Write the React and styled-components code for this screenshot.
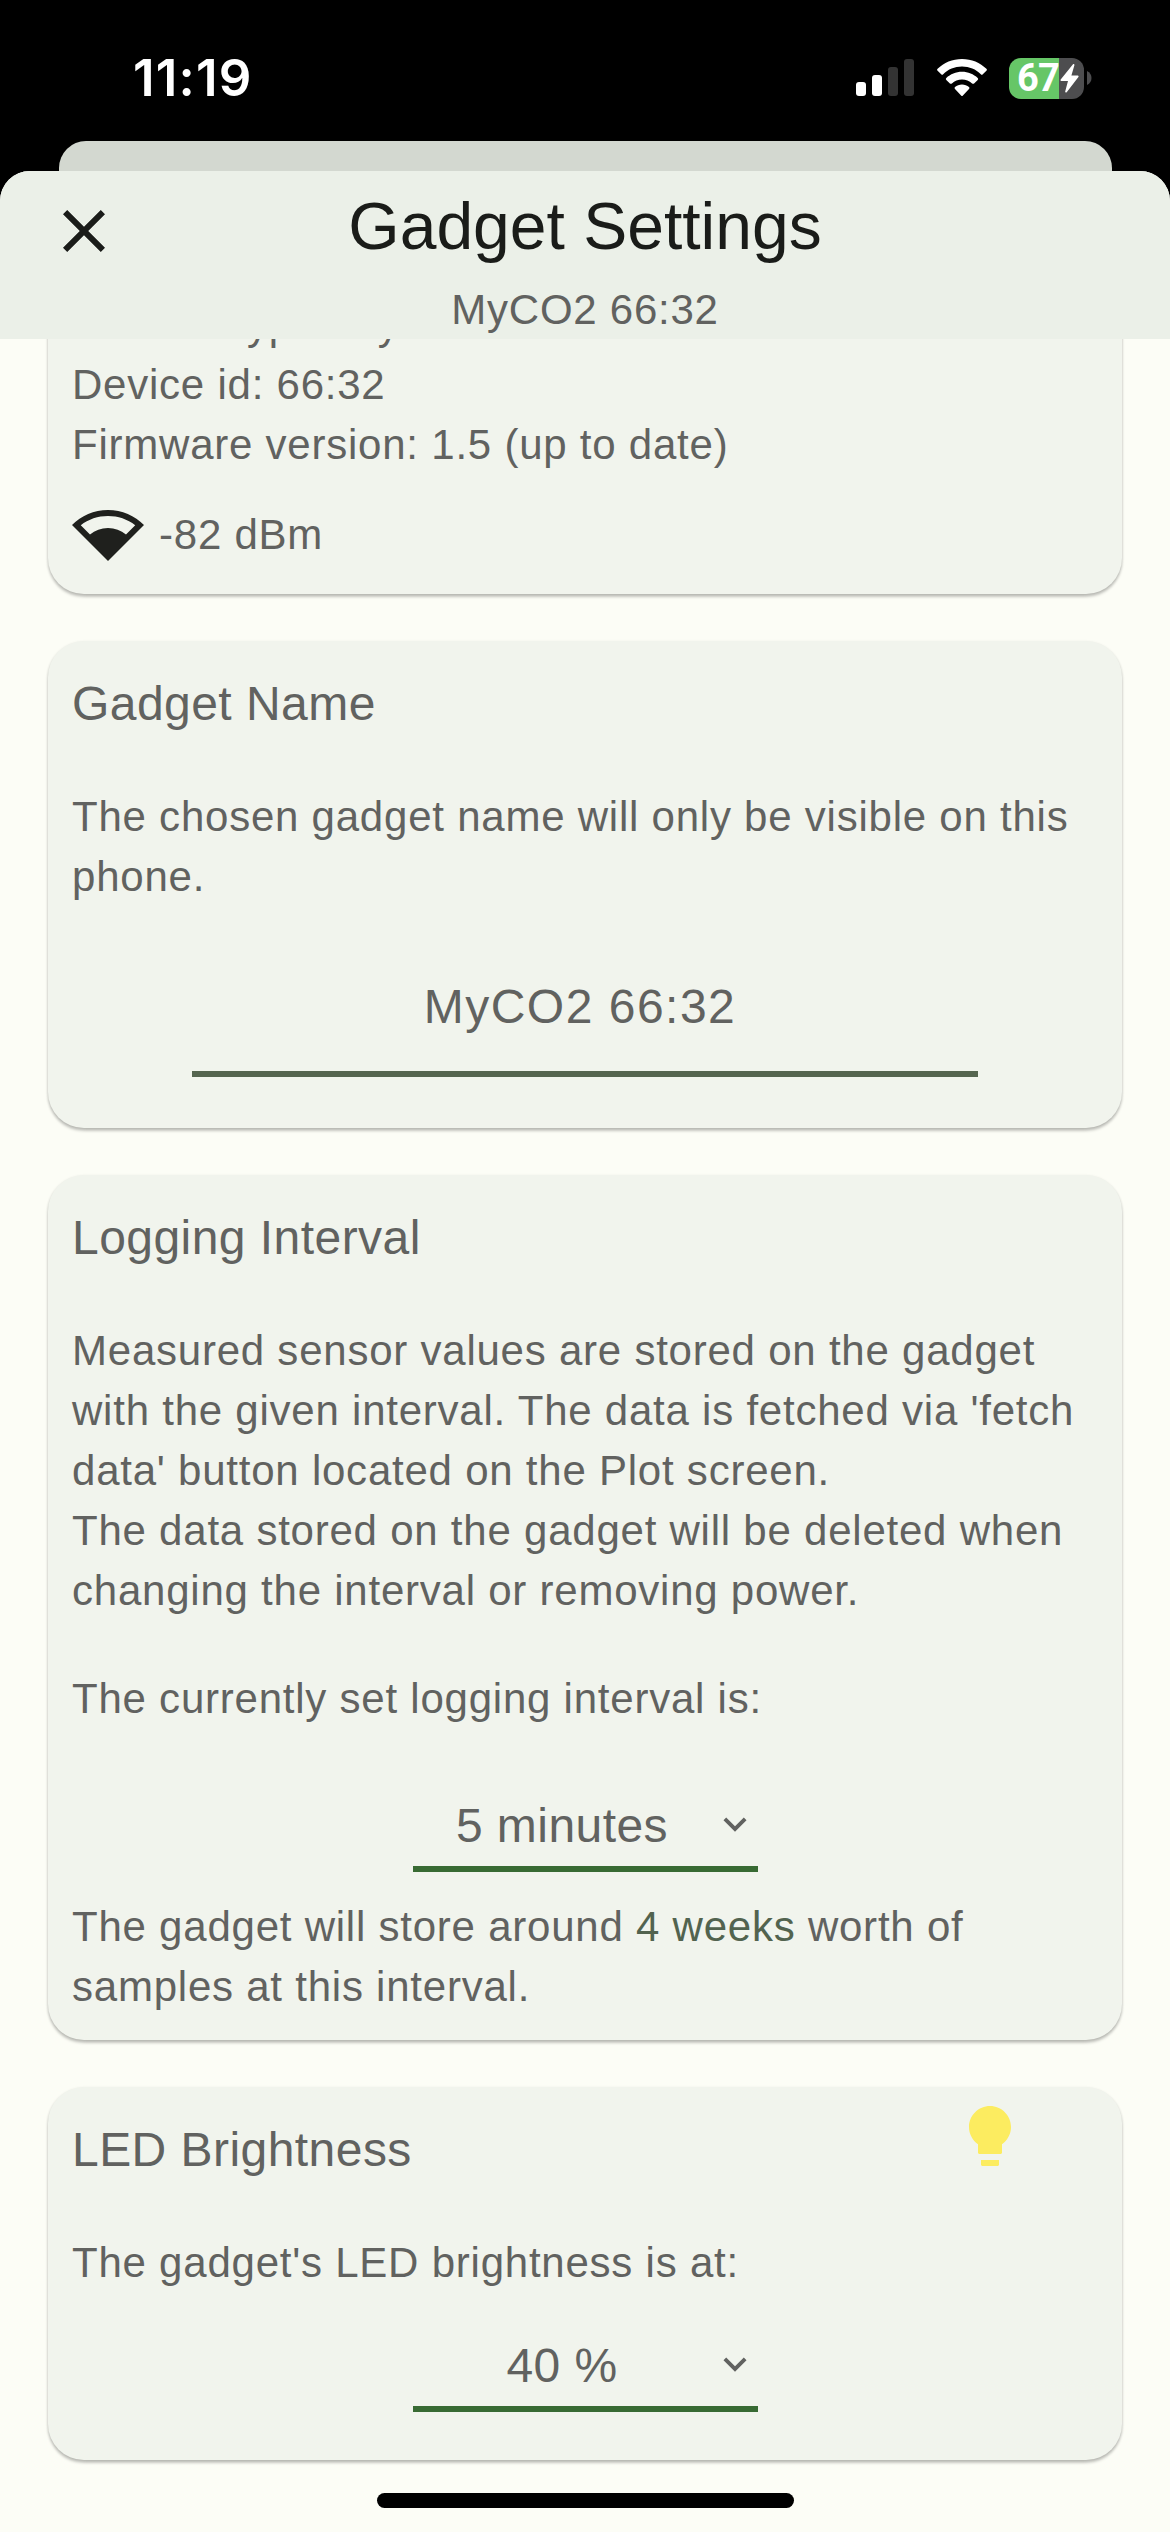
import React from 'react';
import styled, { createGlobalStyle } from 'styled-components';

const sans = '"Liberation Sans", Arial, sans-serif';

const GlobalStyle = createGlobalStyle`
  * { box-sizing: border-box; }
  body { margin: 0; background: #000; }
`;

const Screen = styled.div`
  position: relative;
  display: flex;
  flex-direction: column;
  width: 1170px;
  height: 2532px;
  overflow: hidden;
  background: #000;
  color: #616260;
  font-family: ${sans};
`;

const StatusBar = styled.header`
  display: flex;
  justify-content: space-between;
  height: 141px;
  padding: 48px 78px 0 133px;
`;

const Clock = styled.time`
  color: #fff;
  font: 600 51px/60px Inter, sans-serif;
  letter-spacing: 1.2px;
`;

const StatusIcons = styled.div`
  display: flex;
  align-items: center;
  height: 60px;
  gap: 22px;
`;

const Battery = styled.div`
  display: flex;
  align-items: center;
  gap: 3px;
`;

const BatteryBody = styled.div`
  display: flex;
  align-items: center;
  justify-content: space-between;
  width: 75px;
  height: 41px;
  padding: 0 5px 0 8px;
  border-radius: 12px;
  background: linear-gradient(to right, #66c667 50px, #4d4d4f 50px);
  color: #fff;
  font: 700 38px/41px Roboto, sans-serif;
  letter-spacing: -0.8px;
`;

const PreviousSheet = styled.div`
  height: 30px;
  margin: 0 58px 0 59px;
  border-radius: 27px 27px 0 0;
  background: #d3d8d0;
`;

const Sheet = styled.main`
  display: flex;
  flex-direction: column;
  flex: 1;
  min-height: 0;
  border-radius: 30px 30px 0 0;
  overflow: hidden;
  background: #fcfdf6;
`;

const SheetHeader = styled.div`
  display: grid;
  grid-template-columns: 72px 1fr 72px;
  height: 168px;
  padding: 13px 48px 0;
  flex: none;
  background: #ebf0e8;
`;

const CloseButton = styled.button`
  width: 72px;
  height: 72px;
  margin-top: 11px;
  padding: 0;
  border: 0;
  background: none;
  color: #1a1c19;
`;

const Titles = styled.div`
  text-align: center;
`;

const Title = styled.h1`
  margin: 0;
  color: #1a1c19;
  font-size: 66px;
  font-weight: 400;
  line-height: 84px;
`;

const Subtitle = styled.div`
  margin-top: 12px;
  font-size: 42px;
  line-height: 60px;
  letter-spacing: 0.75px;
`;

const Scroll = styled.div`
  display: flex;
  flex-direction: column;
  justify-content: flex-end;
  gap: 47px;
  flex: 1;
  min-height: 0;
  overflow: hidden;
  padding: 0 48px 72px;
`;

const Card = styled.section`
  flex: none;
  padding: 27px 24px ${(p) => p.$bottom}px;
  border-radius: 36px;
  background: #f1f4ed;
  box-shadow: 0 3px 3px rgba(0, 0, 0, 0.2), 0 1px 3px rgba(0, 0, 0, 0.12);
`;

const CardHead = styled.div`
  display: flex;
  justify-content: space-between;
  height: 72px;
  margin-bottom: 47px;
  padding-right: 72px;
`;

const Heading = styled.h2`
  margin: 0;
  font-size: 48px;
  font-weight: 400;
  line-height: 72px;
  letter-spacing: 0.45px;
`;

const BulbIcon = styled.svg`
  width: 72px;
  height: 72px;
  margin-top: -14px;
  fill: #fcec60;
`;

const Text = styled.p`
  margin: ${(p) => p.$top || 0}px 0 0;
  font-size: 42px;
  line-height: 60px;
  letter-spacing: 0.77px;
`;

const Accent = styled.span`
  color: #52634f;
`;

const Signal = styled.div`
  display: flex;
  align-items: center;
  gap: 15px;
  height: 72px;
  margin-top: 23px;
`;

const NameField = styled.div`
  width: 786px;
  height: 106px;
  margin: 64px auto 0;
  padding-right: 10px;
  border-bottom: 6px solid #55654f;
  font-size: 48px;
  line-height: 72px;
  letter-spacing: 1.5px;
  text-align: center;
`;

const Select = styled.div`
  display: flex;
  align-items: flex-start;
  width: 345px;
  height: 82px;
  margin: ${(p) => p.$top}px auto 0;
  border-bottom: 6px solid #386a33;
`;

const SelectValue = styled.span`
  flex: 1;
  font-size: 48px;
  line-height: 72px;
  letter-spacing: 0.45px;
  text-align: center;
`;

const ChevronIcon = styled.svg`
  width: 46px;
  height: 46px;
  margin-top: 11px;
  fill: currentColor;
`;

const HomeIndicator = styled.div`
  position: absolute;
  left: 377px;
  bottom: 24px;
  width: 417px;
  height: 15px;
  border-radius: 8px;
  background: #000;
`;

function Dropdown({ value, top }) {
  return (
    <Select $top={top}>
      <SelectValue>{value}</SelectValue>
      <ChevronIcon viewBox="0 0 24 24">
        <path d="M7.41 8.59 12 13.17l4.59-4.58L18 10l-6 6-6-6z" />
      </ChevronIcon>
    </Select>
  );
}

function CardTitle({ children, icon }) {
  return (
    <CardHead>
      <Heading>{children}</Heading>
      {icon}
    </CardHead>
  );
}

export default function App() {
  return (
    <Screen>
      <GlobalStyle />
      <StatusBar>
        <Clock>11:19</Clock>
        <StatusIcons>
          <svg width="59" height="38" viewBox="0 0 59 38" fill="#fff">
            <rect x="0" y="23" width="10" height="14" rx="3" />
            <rect x="16" y="16" width="10" height="21" rx="3" />
            <g fill="#333">
              <rect x="32" y="8" width="10" height="29" rx="3" />
              <rect x="48" y="0" width="10" height="37" rx="3" />
            </g>
          </svg>
          <svg width="50" height="38" viewBox="0 0 50 38" fill="#fff">
            <path d="M25 0C15.5 0 6.8 3.7.6 9.8a1.4 1.4 0 0 0 0 2L4.2 15.2a1.4 1.4 0 0 0 2 0C11 10.4 17.7 7.6 25 7.600S39 10.400 43.800 15.200a1.400 1.400 0 0 0 2 0l3.600-3.400a1.400 1.400 0 0 0 0-2C43.200 3.700 34.500 0 25 0Z" />
            <path d="M25 12.700c-6.100 0-11.600 2.400-15.700 6.200a1.400 1.400 0 0 0 0 2l3.600 3.500a1.500 1.500 0 0 0 2 0C17.600 21.900 21.100 20.400 25 20.400s7.400 1.500 10.100 4a1.500 1.500 0 0 0 2 0l3.600-3.500a1.400 1.400 0 0 0 0-2C36.600 15.100 31.100 12.700 25 12.700Z" />
            <path d="M25 25.500c-2.700 0-5.100 1-7 2.600a1.300 1.300 0 0 0 0 1.900l6.100 6.500a1.200 1.200 0 0 0 1.800 0l6.100-6.500a1.300 1.300 0 0 0 0-1.900c-1.900-1.600-4.300-2.600-7-2.600Z" />
          </svg>
          <Battery>
            <BatteryBody>
              67
              <svg width="19" height="29" viewBox="0 0 19 32" fill="#fff" preserveAspectRatio="none">
                <path d="M12.8.5.7 17.2c-.5.7-.1 1.500.7 1.500H8L5.200 30.400c-.3 1.100.8 1.600 1.500.7L18.400 14.300c.5-.7.1-1.500-.7-1.500H11.400L14.400 1.300C14.700.2 13.500-.5 12.800.5Z" />
              </svg>
            </BatteryBody>
            <svg width="5" height="14" viewBox="0 0 5 14" fill="#4d4d4f">
              <path d="M0 0C3 1.500 4.500 4 4.500 7S3 12.500 0 14Z" />
            </svg>
          </Battery>
        </StatusIcons>
      </StatusBar>
      <PreviousSheet />
      <Sheet>
        <SheetHeader>
          <CloseButton aria-label="Close">
            <svg width="72" height="72" viewBox="0 0 24 24" fill="currentColor">
              <path d="M19 6.410 17.590 5 12 10.590 6.410 5 5 6.410 10.590 12 5 17.590 6.410 19 12 13.410 17.590 19 19 17.590 13.410 12z" />
            </svg>
          </CloseButton>
          <Titles>
            <Title>Gadget Settings</Title>
            <Subtitle>MyCO2 66:32</Subtitle>
          </Titles>
        </SheetHeader>
        <Scroll>
          <Card $bottom={24}>
            <Text>Product type: MyCO2</Text>
            <Text>Device id: 66:32</Text>
            <Text>Firmware version: 1.5 (up to date)</Text>
            <Signal>
              <svg width="72" height="72" viewBox="0 0 24 24" fill="#1f201d">
                <path fillRule="evenodd" d="M24 8.980C20.930 5.900 16.690 4 12 4S3.070 5.900 0 8.980L12 21ZM2.920 9.070C5.510 7.080 8.670 6 12 6s6.490 1.080 9.080 3.070L18 12.150C16.300 10.800 14.300 10 12 10s-4.300.8-6 2.150Z" />
              </svg>
              <Text as="span" $top={2}>-82 dBm</Text>
            </Signal>
          </Card>
          <Card $bottom={51}>
            <CardTitle>Gadget Name</CardTitle>
            <Text>The chosen gadget name will only be visible on this phone.</Text>
            <NameField>MyCO2 66:32</NameField>
          </Card>
          <Card $bottom={23}>
            <CardTitle>Logging Interval</CardTitle>
            <Text>
              Measured sensor values are stored on the gadget with the given
              interval. The data is fetched via 'fetch data' button located on
              the Plot screen.
              <br />
              The data stored on the gadget will be deleted when changing the
              interval or removing power.
            </Text>
            <Text $top={48}>The currently set logging interval is:</Text>
            <Dropdown value="5 minutes" top={61} />
            <Text $top={25}>
              The gadget will store around <Accent>4 weeks</Accent> worth of
              samples at this interval.
            </Text>
          </Card>
          <Card $bottom={48}>
            <CardTitle
              icon={
                <BulbIcon viewBox="0 0 24 24">
                  <path d="M9 21.500c0 .28.22.5.500.500h5c.28 0 .5-.22.5-.5V20H9v1.500zM12 2C8.140 2 5 5.140 5 9c0 2.380 1.190 4.470 3 5.740V17.500c0 .28.22.5.500.500h7c.28 0 .5-.22.5-.5v-2.760c1.810-1.270 3-3.360 3-5.740 0-3.860-3.140-7-7-7z" />
                </BulbIcon>
              }
            >
              LED Brightness
            </CardTitle>
            <Text>The gadget's LED brightness is at:</Text>
            <Dropdown value="40 %" top={37} />
          </Card>
        </Scroll>
      </Sheet>
      <HomeIndicator />
    </Screen>
  );
}
